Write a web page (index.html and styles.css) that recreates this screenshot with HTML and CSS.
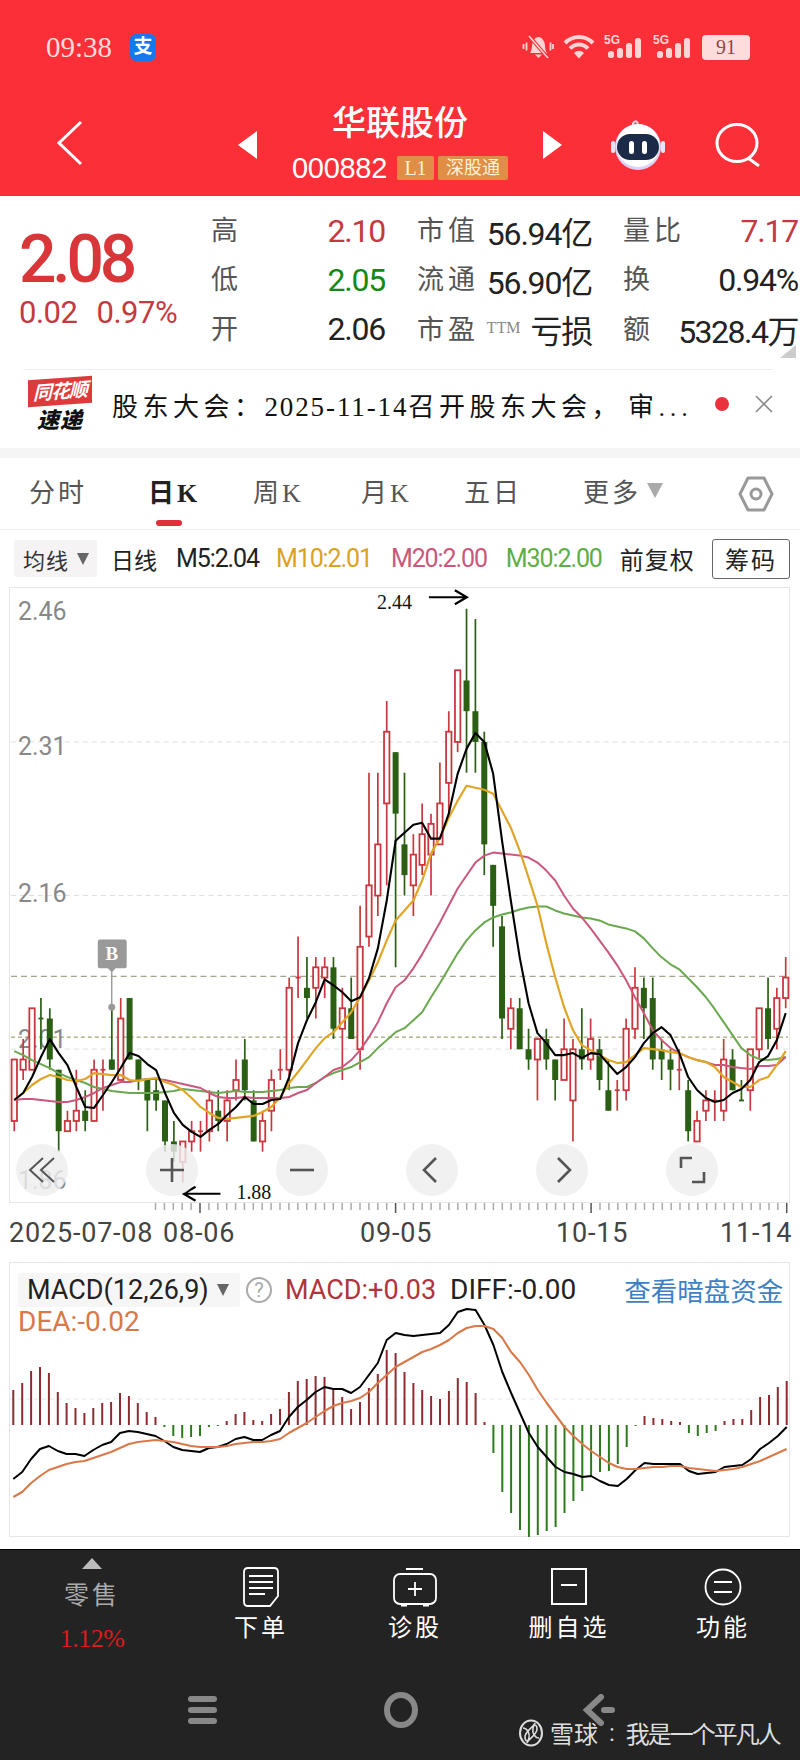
FILE: index.html
```html
<!DOCTYPE html>
<html lang="zh-CN">
<head>
	<meta charset="UTF-8">
	<title>华联股份</title>
	<link rel="stylesheet" href="styles.css">
	<script src="script.js"></script>
</head>
<body>
	<header class="top">
		<div class="status">
			<span class="clock">09:38</span>
			<span class="pay">支</span>
			<div class="status-icons">
				<svg class="s-bell" viewBox="0 0 32 24" width="32" height="24">
					<path d="M8 18 C11 14 9 8 12 5 C14 1 19 1 21 5 C24 8 22 14 25 18 Z" fill="#ffd4d4"/>
					<path d="M13 19.500 H20 L16.500 23 Z" fill="#ffd4d4"/>
					<path d="M7 1 L26 23" stroke="#fb2f38" stroke-width="3.600"/>
					<path d="M7 1 L26 23" stroke="#ffd4d4" stroke-width="1.600"/>
					<path d="M1.500 9 V14 M4.500 7.500 V15.500 M28.500 7.500 V15.500 M31 9 V14" stroke="#ffd4d4" stroke-width="1.800"/>
				</svg>
				<svg class="s-wifi" viewBox="0 0 32 24" width="32" height="24">
					<path d="M2 8 C10 0 22 0 30 8" fill="none" stroke="#ffd4d4" stroke-width="4"/>
					<path d="M7 13.500 C12 8 20 8 25 13.500" fill="none" stroke="#ffd4d4" stroke-width="4"/>
					<path d="M11 18 C14 15 18 15 21 18 L16 23.500 Z" fill="#ffd4d4"/>
				</svg>
				<svg class="s-signal" viewBox="0 -4 40 28" width="40" height="28">
					<text x="0" y="9" class="s-five">5G</text>
					<rect x="4" y="16" width="6" height="7" rx="2.500" fill="#ffd4d4"/>
					<rect x="13" y="13" width="6" height="10" rx="2.500" fill="#ffd4d4"/>
					<rect x="22" y="8" width="6" height="15" rx="2.500" fill="#ffd4d4"/>
					<rect x="31" y="3" width="6" height="20" rx="2.500" fill="#ffd4d4"/>
				</svg>
				<svg class="s-signal" viewBox="0 -4 40 28" width="40" height="28">
					<text x="0" y="9" class="s-five">5G</text>
					<rect x="4" y="16" width="6" height="7" rx="2.500" fill="#ffd4d4"/>
					<rect x="13" y="13" width="6" height="10" rx="2.500" fill="#ffd4d4"/>
					<rect x="22" y="8" width="6" height="15" rx="2.500" fill="#ffd4d4"/>
					<rect x="31" y="3" width="6" height="20" rx="2.500" fill="#ffd4d4"/>
				</svg>
				<span class="battery">91</span>
			</div>
		</div>
		<div class="bar">
			<svg class="back" viewBox="0 0 27 46" width="27" height="46">
				<path d="M25 2 L3 23 L25 44" fill="none" stroke="#fff" stroke-width="3"/>
			</svg>
			<div class="stock-nav">
				<i class="tri-left"></i>
				<div class="stock">
					<div class="stock-name">华联股份</div>
					<div class="stock-code">
						<span class="code">000882</span>
						<span class="tag tag-l1">L1</span>
						<span class="tag">深股通</span>
					</div>
				</div>
				<i class="tri-right"></i>
			</div>
			<svg class="robot" viewBox="0 0 54 50" width="54" height="50">
				<path d="M23 8 C20 3 24 0 26 2 C28 4 26 6 24 5" fill="none" stroke="#f4d8e8" stroke-width="2"/>
				<circle cx="27" cy="27" r="23" fill="#dcd2f8"/>
				<circle cx="27" cy="25.500" r="21.500" fill="#fff"/>
				<rect x="0" y="21" width="4" height="12" rx="2" fill="#e8e2fa"/>
				<rect x="50" y="21" width="4" height="12" rx="2" fill="#e8e2fa"/>
				<rect x="6" y="14" width="42" height="26" rx="13" fill="#1b2a48"/>
				<rect x="18" y="21" width="5" height="13" rx="2.500" fill="#fff"/>
				<rect x="31" y="21" width="5" height="13" rx="2.500" fill="#fff"/>
			</svg>
			<svg class="search" viewBox="0 0 46 44" width="46" height="44">
				<ellipse cx="22" cy="20" rx="20" ry="18.500" fill="none" stroke="#fff" stroke-width="3"/>
				<path d="M33 35 L44 43" stroke="#fff" stroke-width="3"/>
			</svg>
		</div>
	</header>

	<section class="quote">
		<div class="price">
			<div class="last">2.08</div>
			<div class="change"><span>0.02</span><span>0.97%</span></div>
		</div>
		<div class="stats">
			<span class="name">高</span><span class="val up">2.10</span>
			<span class="name n2">市值</span><span class="val">56.94亿</span>
			<span class="name n3">量比</span><span class="val up">7.17</span>

			<span class="name">低</span><span class="val down">2.05</span>
			<span class="name n2">流通</span><span class="val">56.90亿</span>
			<span class="name n3">换</span><span class="val">0.94%</span>

			<span class="name">开</span><span class="val">2.06</span>
			<span class="name n2">市盈</span><span class="val"><small class="ttm">TTM</small>亏损</span>
			<span class="name n3">额</span><span class="val amount">5328.4万</span>
		</div>
		<i class="corner"></i>
	</section>

	<section class="news">
		<div class="logo">
			<div class="logo-top">同花顺</div>
			<div class="logo-bottom">速递</div>
		</div>
		<p class="news-text">股东大会：<span class="date">2025-11-14</span>召开股东大会<span class="comma">，</span>审...</p>
		<i class="dot"></i>
		<svg class="close" viewBox="0 0 18 18" width="18" height="18">
			<path d="M1 1 L17 17 M17 1 L1 17" stroke="#888" stroke-width="1.6"/>
		</svg>
	</section>

	<nav class="tabs">
		<a>分时</a>
		<a class="active">日K</a>
		<a>周K</a>
		<a>月K</a>
		<a>五日</a>
		<a>更多<i class="caret"></i></a>
		<svg class="hex" viewBox="0 0 36 36" width="36" height="36">
			<path d="M10 2 H26 L34 18 L26 34 H10 L2 18 Z" fill="none" stroke="#999" stroke-width="3" stroke-linejoin="round"/>
			<circle cx="18" cy="18" r="5" fill="none" stroke="#999" stroke-width="3"/>
		</svg>
	</nav>

	<div class="ma-row">
		<div class="chip">均线<i class="chip-caret"></i></div>
		<span class="ma-day">日线</span>
		<span class="m5">M5:2.04</span>
		<span class="m10">M10:2.01</span>
		<span class="m20">M20:2.00</span>
		<span class="m30">M30:2.00</span>
		<span class="adjust">前复权</span>
		<button class="chips-btn">筹码</button>
	</div>

	<div class="chart">
		<svg id="kline" viewBox="9 587 781 615"></svg>
		<div class="chart-btns">
			<div class="round"><svg viewBox="0 0 30 30" width="30" height="30"><path d="M16 3 L3 15 L16 27 M27 3 L14 15 L27 27" fill="none" stroke="#555" stroke-width="2"/></svg></div>
			<div class="round"><svg viewBox="0 0 30 30" width="30" height="30"><path d="M15 3 V27 M3 15 H27" fill="none" stroke="#555" stroke-width="2.600"/></svg></div>
			<div class="round"><svg viewBox="0 0 30 30" width="30" height="30"><path d="M3 15 H27" fill="none" stroke="#555" stroke-width="2.600"/></svg></div>
			<div class="round"><svg viewBox="0 0 30 30" width="30" height="30"><path d="M19 3 L7 15 L19 27" fill="none" stroke="#555" stroke-width="2.600"/></svg></div>
			<div class="round"><svg viewBox="0 0 30 30" width="30" height="30"><path d="M11 3 L23 15 L11 27" fill="none" stroke="#555" stroke-width="2.600"/></svg></div>
			<div class="round"><svg viewBox="0 0 30 30" width="30" height="30"><path d="M15 3 H4 V13 M15 27 H27 V17" fill="none" stroke="#555" stroke-width="2.600"/></svg></div>
		</div>
	</div>
	<svg id="ticks" class="ticks" viewBox="0 0 800 12" width="800" height="12"></svg>
	<div class="dates">
		<span>2025-07-08</span>
		<span>08-06</span>
		<span>09-05</span>
		<span>10-15</span>
		<span>11-14</span>
	</div>

	<div class="macd">
		<svg id="macdsvg" viewBox="9 1262 781 275"></svg>
		<div class="macd-head">
			<div class="macd-sel">MACD(12,26,9)<i class="chip-caret"></i></div>
			<span class="help">?</span>
			<span class="macd-val">MACD:+0.03</span>
			<span class="diff-val">DIFF:-0.00</span>
			<a class="dark-link">查看暗盘资金</a>
		</div>
		<div class="dea-val">DEA:-0.02</div>
	</div>

	<footer class="foot">
		<div class="actions">
			<div class="action retail">
				<i class="up-tri"></i>
				<span class="retail-name">零售</span>
				<span class="retail-pct">1.12%</span>
			</div>
			<div class="action">
				<svg viewBox="0 0 36 40" width="36" height="40">
					<path d="M5 1 H31 Q35 1 35 5 V29 L27 39 H5 Q1 39 1 35 V5 Q1 1 5 1 Z" fill="none" stroke="#fff" stroke-width="1.800"/>
					<path d="M6 9 H30 M6 15 H30 M6 21 H30 M6 27 H22" stroke="#fff" stroke-width="1.800"/>
				</svg>
				<span>下单</span>
			</div>
			<div class="action">
				<svg viewBox="0 0 44 40" width="44" height="40">
					<path d="M13 2 H30" stroke="#fff" stroke-width="2"/>
					<rect x="1" y="7" width="42" height="30" rx="6" fill="none" stroke="#fff" stroke-width="1.800"/>
					<path d="M22 15 V29 M15 22 H29" stroke="#fff" stroke-width="1.800"/>
					<path d="M8 38 H14 M30 38 H36" stroke="#fff" stroke-width="3"/>
				</svg>
				<span>诊股</span>
			</div>
			<div class="action">
				<svg viewBox="0 0 36 40" width="36" height="40">
					<rect x="1" y="2" width="34" height="35" fill="none" stroke="#fff" stroke-width="2"/>
					<path d="M10 18 H26" stroke="#fff" stroke-width="2"/>
				</svg>
				<span>删自选</span>
			</div>
			<div class="action">
				<svg viewBox="0 0 38 40" width="38" height="40">
					<circle cx="19" cy="20" r="17.500" fill="none" stroke="#fff" stroke-width="1.800"/>
					<path d="M10 15 H28 M10 25 H28" stroke="#fff" stroke-width="2"/>
				</svg>
				<span>功能</span>
			</div>
		</div>
		<div class="sysnav">
			<div class="sys-bars"><i></i><i></i><i></i></div>
			<i class="sys-ring"></i>
			<svg viewBox="0 0 34 32" width="34" height="32">
				<path d="M19 3 L5 16 L19 29" fill="none" stroke="#888" stroke-width="6" stroke-linecap="round"/>
				<path d="M22 16 H30" stroke="#888" stroke-width="6" stroke-linecap="round"/>
			</svg>
		</div>
		<div class="mark">
			<svg viewBox="0 0 26 28" width="26" height="28">
				<ellipse cx="13" cy="14" rx="11" ry="12.500" fill="none" stroke="#ddd" stroke-width="2"/>
				<path d="M5 9 C9 9 12 14 11 19 C10 24 7 22 7 18 C7 12 16 8 17 4 M21 19 C17 19 14 14 15 9 C16 4 19 6 19 10 C19 16 10 20 9 24" fill="none" stroke="#ddd" stroke-width="1.600"/>
			</svg>
			<span>雪球</span>
			<span class="mark-colon">:</span>
			<span class="mark-name">我是一个平凡人</span>
		</div>
	</footer>
</body>
</html>
```

FILE: styles.css
```css
* {
	box-sizing: border-box;
}
body {
	margin: 0;
	width: 800px;
	height: 1760px;
	overflow: hidden;
	background: #fff;
	color: #222;
	font-family: Roboto, "Noto Sans CJK SC", sans-serif;
}
i {
	display: block;
}
p {
	margin: 0;
}

/* red header */
.top {
	height: 196px;
	background: #fb2f38;
	border-bottom: 1px solid #b9484c;
}
.status {
	height: 94px;
	display: flex;
	align-items: center;
	padding-left: 46px;
}
.clock {
	width: 84px;
	font-family: "Liberation Serif", serif;
	font-size: 29px;
	color: #ffdcdc;
}
.pay {
	width: 26px;
	height: 27px;
	line-height: 25px;
	text-align: center;
	border-radius: 6px;
	background: #1677ee;
	color: #fff;
	font-size: 19px;
	font-weight: 700;
}
.status-icons {
	margin-left: auto;
	margin-right: 50px;
	display: flex;
	align-items: center;
	gap: 9px;
}
.s-signal {
	margin-bottom: 4px;
}
.s-five {
	font-family: "Liberation Sans", sans-serif;
	font-size: 12px;
	font-weight: 700;
	fill: #ffd4d4;
}
.battery {
	width: 48px;
	height: 25px;
	line-height: 25px;
	text-align: center;
	border-radius: 4px;
	background: #ffdcdc;
	color: #8a4a4a;
	font-family: "Liberation Serif", serif;
	font-size: 20px;
}
.bar {
	height: 101px;
	display: flex;
	align-items: center;
	padding-left: 56px;
}
.back {
	margin-bottom: 4px;
}
.stock-nav {
	width: 324px;
	margin-left: 155px;
	display: flex;
	align-items: center;
	justify-content: space-between;
}
.tri-left {
	border-top: 14px solid transparent;
	border-bottom: 14px solid transparent;
	border-right: 19px solid #fff;
}
.tri-right {
	border-top: 14px solid transparent;
	border-bottom: 14px solid transparent;
	border-left: 19px solid #fff;
}
.stock {
	margin-bottom: 4px;
	text-align: center;
	color: #fff;
}
.stock-name {
	font-size: 34px;
	line-height: 36px;
	font-weight: 500;
}
.stock-code {
	margin-top: 15px;
	display: flex;
	align-items: center;
	gap: 4px;
}
.code {
	margin-right: 6px;
	font-family: "Liberation Sans", sans-serif;
	font-size: 29px;
	line-height: 24px;
	letter-spacing: -0.3px;
}
.tag {
	height: 24px;
	padding: 0 8px;
	line-height: 24px;
	background: #e08e45;
	color: #fff3d9;
	font-size: 18px;
	border-radius: 2px;
}
.tag-l1 {
	width: 37px;
	padding: 0;
	font-family: "Liberation Serif", serif;
	font-size: 20px;
}
.robot {
	margin-left: 49px;
}
.search {
	margin-left: 50px;
}

/* quote numbers */
.quote {
	position: relative;
	height: 174px;
	display: flex;
	padding-top: 10px;
}
.price {
	width: 211px;
	padding-left: 19px;
	color: #d9363a;
}
.last {
	margin-top: 21px;
	font-size: 66px;
	line-height: 66px;
	letter-spacing: -4.200px;
	font-weight: 500;
}
.change {
	margin-top: 3px;
	display: flex;
	gap: 19px;
	font-size: 31px;
	line-height: 34px;
	letter-spacing: -0.500px;
	color: #c43a42;
}
.stats {
	display: grid;
	grid-template-columns: 40px 134px 97px 110px 84px 122px;
	grid-template-rows: 49px 49px 50px;
	align-items: center;
	white-space: nowrap;
}
.name {
	margin-bottom: 4px;
	font-size: 27px;
	letter-spacing: 4px;
	color: #555;
}
.n2 {
	padding-left: 32px;
}
.n3 {
	padding-left: 31px;
}
.val {
	text-align: right;
	font-size: 32px;
	letter-spacing: -1.200px;
	color: #222;
}
.amount {
	letter-spacing: -1.500px;
}
.up {
	color: #c43a42;
}
.down {
	color: #138a14;
}
.ttm {
	margin-right: 10px;
	vertical-align: 10px;
	font-family: "Liberation Serif", serif;
	font-size: 16px;
	letter-spacing: 0;
	color: #888;
}
.corner {
	position: absolute;
	right: 4px;
	top: 149px;
	border-left: 16px solid transparent;
	border-bottom: 13px solid #ccc;
}

/* news strip */
.news {
	position: relative;
	height: 88px;
	margin: 0;
	padding: 0 27px 10px 28px;
	display: flex;
	align-items: center;
	border-bottom: 10px solid #f5f5f5;
}
.news::before {
	content: "";
	position: absolute;
	top: -1px;
	left: 25px;
	right: 27px;
	height: 1px;
	background: #eee;
}
.logo {
	width: 64px;
	text-align: center;
}
.logo-top {
	height: 27px;
	line-height: 27px;
	background: #dd3a3c;
	color: #fff;
	font-size: 19px;
	font-weight: 700;
	font-style: italic;
	white-space: nowrap;
	letter-spacing: -1px;
	transform: skewY(-4deg);
}
.logo-bottom {
	margin-top: 5px;
	line-height: 21px;
	font-size: 22px;
	font-weight: 900;
	font-style: italic;
	color: #111;
	letter-spacing: 1px;
}
.news-text {
	margin-left: 20px;
	width: 604px;
	font-size: 26px;
	letter-spacing: 4.500px;
	white-space: nowrap;
	color: #111;
}
.date {
	font-family: "Liberation Serif", serif;
	font-size: 27px;
	letter-spacing: 1.900px;
}
.comma {
	padding-right: 6px;
}
.dot {
	width: 14px;
	height: 14px;
	border-radius: 50%;
	background: #e8323c;
}
.close {
	margin-left: 26px;
}

/* period tabs */
.tabs {
	position: relative;
	height: 72px;
	padding: 0 0 6px 29px;
	display: grid;
	grid-template-columns: 119px 105px 108px 103px 119px 155px auto;
	align-items: center;
	border-bottom: 1px solid #eee;
}
.tabs a {
	position: relative;
	font-family: "Liberation Serif", "Noto Sans CJK SC", serif;
	font-size: 26px;
	letter-spacing: 3px;
	color: #555;
	white-space: nowrap;
	display: flex;
	align-items: center;
}
.tabs a.active {
	font-weight: 700;
	color: #222;
}
.tabs a.active::after {
	content: "";
	position: absolute;
	left: 8px;
	top: 48px;
	width: 26px;
	height: 6px;
	border-radius: 3px;
	background: #e0303a;
}
.caret {
	margin-left: 6px;
	border-top: 15px solid #aaa;
	border-left: 8px solid transparent;
	border-right: 8px solid transparent;
}
.hex {
	margin-top: 6px;
}

/* moving average row */
.ma-row {
	height: 57px;
	padding: 0 10px 0 14px;
	display: flex;
	align-items: center;
	font-size: 25px;
	letter-spacing: -1.100px;
	white-space: nowrap;
}
.ma-row > * {
	flex-shrink: 0;
}
.chip {
	width: 83px;
	height: 37px;
	padding-left: 9px;
	display: flex;
	align-items: center;
	gap: 8px;
	background: #f5f3f3;
	border-radius: 3px;
	font-size: 22px;
	letter-spacing: 1px;
	color: #333;
}
.chip-caret {
	border-top: 12px solid #666;
	border-left: 6px solid transparent;
	border-right: 6px solid transparent;
}
.ma-day {
	margin-left: 14px;
	letter-spacing: 0;
	font-size: 23px;
}
.m5 {
	margin-left: 19px;
}
.m10 {
	margin-left: 17px;
	color: #dba21f;
}
.m20 {
	margin-left: 19px;
	color: #c9587a;
}
.m30 {
	margin-left: 19px;
	color: #5fae45;
}
.adjust {
	margin-left: 18px;
	font-size: 24px;
	letter-spacing: 1px;
}
.chips-btn {
	width: 78px;
	height: 40px;
	margin-left: auto;
	padding: 0;
	background: #fff;
	border: 1px solid #666;
	border-radius: 3px;
	font-family: inherit;
	font-size: 24px;
	letter-spacing: 2px;
	color: #222;
}

/* kline */
.chart {
	position: relative;
	width: 781px;
	height: 616px;
	margin-left: 9px;
	border: 1px solid #e6e6e6;
}
#kline {
	position: absolute;
	left: 0;
	top: 0;
	width: 779px;
	height: 614px;
	overflow: visible;
}
.axis {
	font-family: Roboto, sans-serif;
	font-size: 25px;
	fill: #888;
}
.mark-txt {
	font-family: "Liberation Serif", serif;
	font-size: 20px;
	fill: #111;
}
.chart-btns {
	position: absolute;
	left: 6px;
	bottom: 6px;
	display: flex;
	gap: 78px;
}
.round {
	width: 52px;
	height: 52px;
	display: flex;
	align-items: center;
	justify-content: center;
	border-radius: 50%;
	background: rgba(238, 238, 238, 0.82);
}
.ticks {
	display: block;
}
.dates {
	height: 47px;
	padding: 0 0 11px 9px;
	display: grid;
	grid-template-columns: 154px 197px 196px 164px auto;
	align-items: center;
	font-size: 27px;
	color: #444;
	white-space: nowrap;
}
.dates span {
	letter-spacing: 0.800px;
}

/* macd */
.macd {
	position: relative;
	width: 781px;
	height: 275px;
	margin-left: 9px;
	border: 1px solid #e6e6e6;
	font-size: 27px;
}
#macdsvg {
	position: absolute;
	left: -1px;
	top: -1px;
	width: 781px;
	height: 275px;
}
.macd-head {
	position: relative;
	padding: 7px 0 0 8px;
	display: flex;
	align-items: center;
	white-space: nowrap;
}
.macd-sel {
	width: 222px;
	height: 34px;
	padding-left: 9px;
	display: flex;
	align-items: center;
	gap: 8px;
	background: #f6f6f6;
	border-radius: 3px;
}
.help {
	width: 26px;
	height: 26px;
	margin-left: 6px;
	line-height: 22px;
	text-align: center;
	border: 2px solid #aaa;
	border-radius: 50%;
	font-size: 20px;
	color: #aaa;
}
.macd-val {
	margin-left: 13px;
	color: #b0343c;
}
.diff-val {
	margin-left: 14px;
	font-size: 28px;
}
.dark-link {
	margin-left: 48px;
	font-size: 26.500px;
	color: #3d7fc4;
}
.dea-val {
	position: relative;
	margin-left: 8px;
	line-height: 26px;
	font-size: 28px;
	color: #d9794a;
}

/* dark footer */
.foot {
	position: relative;
	height: 211px;
	margin-top: 12px;
	background: #232323;
	border-top: 1px solid #000;
	color: #fff;
}
.actions {
	display: grid;
	grid-template-columns: 176px 170px 138px 170px 138px;
	height: 107px;
}
.action {
	padding-top: 17px;
	display: flex;
	flex-direction: column;
	align-items: center;
	font-size: 24px;
	letter-spacing: 3px;
}
.action span {
	margin-top: 6px;
	line-height: 30px;
	white-space: nowrap;
}
.retail {
	padding-top: 8px;
	padding-left: 8px;
}
.up-tri {
	border-bottom: 11px solid #bbb;
	border-left: 10px solid transparent;
	border-right: 10px solid transparent;
}
.action .retail-name {
	margin-top: 12px;
	color: #aaa;
	font-size: 25px;
}
.action .retail-pct {
	margin-top: 13px;
	font-family: "Liberation Serif", serif;
	font-size: 26px;
	letter-spacing: -0.500px;
	color: #d91c1c;
}
.sysnav {
	height: 36px;
	margin-top: 35px;
	padding-left: 188px;
	display: flex;
	align-items: center;
}
.sys-bars {
	width: 29px;
	display: flex;
	flex-direction: column;
	gap: 5px;
}
.sys-bars i {
	height: 6px;
	border-radius: 3px;
	background: #888;
}
.sys-ring {
	width: 34px;
	height: 36px;
	margin-left: 167px;
	margin-right: 164px;
	border: 6px solid #888;
	border-radius: 50%;
}
.mark {
	position: absolute;
	left: 518px;
	top: 165px;
	display: flex;
	align-items: center;
	gap: 6px;
	font-size: 24px;
	color: #ddd;
	white-space: nowrap;
}
.mark-colon {
	margin: 0 5px;
}
.mark-name {
	letter-spacing: -2px;
}
```

FILE: script.js
```js
// each candle: colour, high, body top, body bottom, low (price in cents)
var candles = [
	["r",200,200,194,193],["r",202,200,199,198],["r",205,205,199,199],["g",206,204,204,201],
	["g",205,204,200,199],["g",199,199,193,191],["r",195,194,193,193],["r",199,195,194,193],
	["g",197,195,194,193],["r",200,199,194,194],["r",200,199,199,195],["g",205,200,199,199],
	["r",206,204,198,198],["g",206,206,200,200],["g",200,200,198,197],["g",198,198,196,193],
	["g",198,197,196,195],["g",196,196,192,191],["g",194,192,191,190],["r",192,192,190,188],
	["r",194,193,192,191],["r",194,193,193,191],["r",197,196,193,192],["g",197,195,194,193],
	["r",197,196,194,192],["r",200,198,197,196],["g",202,200,197,196],["g",197,196,192,192],
	["r",195,194,192,191],["r",199,198,195,193],["r",201,199,199,198],["r",208,207,199,197],
	["r",212,208,208,206],["g",210,207,206,204],["r",210,209,207,204],["r",210,209,208,206],
	["g",210,209,203,202],["r",207,205,203,198],["g",208,205,202,202],["r",215,211,201,199],
	["r",228,217,212,211],["r",228,221,216,214],["r",235,232,225,217],["g",230,230,224,209],
	["g",228,221,218,216],["r",222,220,217,214],["r",225,222,219,218],["r",224,223,220,216],
	["r",229,225,221,221],["r",234,232,227,224],["r",238,238,231,230],["g",244,237,234,228],
	["g",243,234,231,228],["g",232,231,221,218],["g",219,219,215,211],["g",214,213,204,202],
	["r",206,205,203,201],["g",206,205,201,201],["g",203,201,200,199],["r",202,202,200,196],
	["g",203,202,200,199],["g",200,200,198,196],["r",204,201,198,198],["r",202,201,196,192],
	["g",205,201,200,199],["r",204,202,200,199],["g",202,201,198,197],["g",200,197,195,195],
	["r",198,197,197,195],["r",204,203,197,196],["r",209,207,203,202],["g",208,207,205,202],
	["g",208,206,200,199],["g",202,201,200,198],["g",201,200,199,197],["r",201,199,199,197],
	["g",198,197,193,192],["r",195,194,192,192],["r",197,196,195,194],["r",197,196,196,194],
	["r",202,200,195,194],["g",201,200,197,197],["g",198,196,196,196],["r",201,201,197,195],
	["r",205,205,201,200],["g",208,205,202,201],["r",207,206,203,201],["r",210,208,206,205]
];
// moving averages, y on the page
var m5 = [1100,1093,1077,1057,1039,1053,1065,1087,1107,1108,1095,1082,1068,1053,1056,1064,1070,1093,1113,1125,1132,1137,1130,1124,1115,1107,1097,1104,1104,1100,1099,1077,1043,1020,1002,979,985,992,1001,997,978,948,900,840,832,824,822,838,838,813,773,748,732,741,773,840,900,957,1003,1033,1043,1055,1055,1053,1058,1053,1054,1064,1074,1067,1057,1043,1033,1027,1035,1053,1077,1090,1098,1102,1100,1093,1089,1080,1062,1056,1040,1013];
var m10 = [1100,1093,1085,1079,1075,1077,1080,1081,1079,1073,1074,1075,1075,1080,1081,1079,1078,1082,1085,1090,1098,1107,1113,1118,1119,1118,1117,1116,1112,1107,1097,1083,1072,1060,1048,1038,1032,1022,1012,997,980,962,940,920,910,900,880,853,837,817,800,785,787,789,793,810,827,850,877,905,943,977,1007,1030,1045,1050,1055,1060,1063,1062,1055,1048,1049,1050,1052,1053,1057,1060,1062,1067,1077,1082,1087,1087,1080,1077,1065,1051];
var m20 = [1100,1099,1099,1100,1101,1102,1102,1100,1097,1093,1088,1085,1082,1082,1080,1079,1079,1080,1082,1084,1086,1088,1093,1097,1098,1098,1097,1098,1098,1098,1098,1097,1093,1090,1083,1077,1070,1067,1060,1050,1037,1022,1003,987,980,968,954,938,922,905,888,875,862,855,852,853,854,855,857,862,870,880,895,908,917,928,940,952,965,980,997,1013,1030,1040,1048,1053,1057,1060,1062,1065,1065,1067,1068,1069,1066,1066,1065,1057];
var m30 = [1051,1055,1060,1064,1068,1073,1077,1080,1083,1087,1089,1091,1092,1093,1093,1093,1093,1092,1091,1089,1090,1091,1092,1093,1092,1091,1092,1092,1092,1091,1090,1088,1087,1087,1083,1077,1073,1070,1067,1062,1057,1048,1040,1032,1028,1020,1012,997,983,968,953,940,930,922,917,914,912,909,907,906,906,910,913,915,917,918,920,924,926,928,931,938,948,957,964,969,978,987,997,1009,1022,1035,1048,1055,1059,1060,1059,1057];
// macd bars, px above the zero line
var bars = [35,42,54,58,52,33,22,17,12,17,22,23,32,29,22,13,8,-2,-11,-13,-12,-11,-2,-1,4,11,13,5,4,11,16,33,44,46,49,48,35,28,16,23,37,51,75,72,53,42,35,29,26,34,47,43,32,3,-28,-67,-88,-105,-112,-110,-106,-102,-88,-76,-66,-52,-47,-46,-39,-22,-1,9,7,6,4,3,-8,-11,-8,-6,4,6,6,15,28,30,38,44];
var diff = [1479,1472,1459,1449,1446,1451,1454,1454,1456,1450,1445,1442,1433,1431,1432,1434,1436,1441,1447,1450,1451,1452,1448,1447,1444,1439,1437,1440,1440,1435,1431,1417,1407,1400,1392,1387,1389,1389,1393,1387,1375,1363,1340,1333,1335,1336,1335,1334,1333,1325,1312,1309,1310,1325,1345,1372,1393,1413,1433,1447,1457,1467,1472,1474,1477,1476,1481,1485,1486,1479,1470,1463,1464,1464,1464,1464,1471,1474,1473,1472,1467,1466,1465,1459,1449,1443,1436,1427];
var dea = [1497,1492,1483,1476,1470,1467,1464,1462,1461,1458,1455,1452,1448,1444,1442,1441,1440,1441,1442,1444,1446,1447,1447,1447,1446,1444,1443,1442,1442,1441,1439,1433,1428,1423,1417,1411,1406,1403,1401,1398,1392,1383,1375,1367,1362,1357,1352,1349,1345,1340,1333,1328,1326,1326,1329,1338,1352,1362,1375,1390,1403,1415,1427,1436,1444,1451,1457,1463,1467,1469,1469,1468,1467,1467,1466,1466,1468,1469,1470,1471,1470,1469,1467,1464,1461,1457,1453,1449];

function xAt(i) {
	return 13.3 + 8.89 * i;
}
function yAt(cents) {
	return 587 + (246 - cents) * 10.27;
}
function polyline(ys, color, width) {
	var pts = [];
	for (var i = 0; i < ys.length; i++) {
		pts.push(xAt(i).toFixed(1) + "," + ys[i]);
	}
	return '<polyline points="' + pts.join(" ") + '" fill="none" stroke="' + color + '" stroke-width="' + width + '" stroke-linejoin="round"/>';
}
function hline(y, color, dash) {
	return '<line x1="10" x2="789" y1="' + y + '" y2="' + y + '" stroke="' + color + '" stroke-dasharray="' + dash + '"/>';
}

function drawKline() {
	var html = "";
	html += hline(741, "#dedede", "5 4") + hline(895, "#dedede", "5 4") + hline(1049, "#dedede", "5 4");
	html += hline(976, "#8f8a72", "6 4") + hline(1037, "#8f8a50", "4 3");
	html += '<text class="axis" x="17" y="619">2.46</text><text class="axis" x="17" y="754">2.31</text>';
	html += '<text class="axis" x="17" y="902">2.16</text><text class="axis" x="17" y="1048">2.01</text>';
	html += '<text class="axis" x="17" y="1189">1.86</text>';

	for (var i = 0; i < candles.length; i++) {
		var c = candles[i];
		var x = xAt(i).toFixed(1);
		var color = c[0] == "r" ? "#c8383f" : "#2b5f14";
		var top = yAt(c[2]);
		var bot = yAt(c[3]);
		html += '<line x1="' + x + '" x2="' + x + '" y1="' + yAt(c[1]) + '" y2="' + yAt(c[4]) + '" stroke="' + color + '" stroke-width="1.700"/>';
		if (c[2] == c[3]) {
			html += '<line x1="' + (x - 2.5) + '" x2="' + (x - 0 + 2.5) + '" y1="' + top + '" y2="' + top + '" stroke="' + color + '" stroke-width="1.800"/>';
		} else if (c[0] == "r") {
			html += '<rect x="' + (x - 2.7) + '" y="' + top + '" width="5.4" height="' + (bot - top) + '" fill="#fff" stroke="' + color + '" stroke-width="1.800"/>';
		} else {
			html += '<rect x="' + (x - 3) + '" y="' + top + '" width="6" height="' + (bot - top) + '" fill="' + color + '"/>';
		}
	}

	html += polyline(m30, "#6aa84f", 2) + polyline(m20, "#c9587a", 2) + polyline(m10, "#e0a526", 2.2) + polyline(m5, "#000", 2.1);

	// buy mark
	html += '<line x1="111" x2="111" y1="970" y2="1007" stroke="#999" stroke-width="1.400"/><circle cx="111" cy="1007" r="3.500" fill="#999"/>';
	html += '<path d="M99 939 H124 Q126 939 126 941 V966 Q126 968 124 968 H115 L111 972 L107 968 H99 Q97 968 97 966 V941 Q97 939 99 939 Z" fill="#999"/>';
	html += '<text x="111" y="960" text-anchor="middle" font-family="Liberation Serif" font-size="19" font-weight="700" fill="#fff">B</text>';

	// high and low arrows
	html += '<text class="mark-txt" x="377" y="608">2.44</text>';
	html += '<path d="M429 596 H467 M455 589 L467 596 L455 603" fill="none" stroke="#000" stroke-width="2.200"/>';
	html += '<text class="mark-txt" x="236" y="1199">1.88</text>';
	html += '<path d="M220 1194 H183 M195 1187 L183 1194 L195 1201" fill="none" stroke="#000" stroke-width="2.200"/>';
	document.querySelector("#kline").innerHTML = html;
}

function drawTicks() {
	var html = "";
	for (var i = 16; i < candles.length; i++) {
		var major = (i == 21 || i == 43 || i == 65 || i == 87);
		var h = major ? 10 : 7;
		var color = major ? "#555" : "#aaa";
		html += '<line x1="' + xAt(i).toFixed(1) + '" x2="' + xAt(i).toFixed(1) + '" y1="0" y2="' + h + '" stroke="' + color + '" stroke-width="1.500"/>';
	}
	document.querySelector("#ticks").innerHTML = html;
}

function drawMacd() {
	var html = hline(1399, "#e6e6e6", "4 4");
	for (var i = 0; i < bars.length; i++) {
		var x = xAt(i).toFixed(1);
		var color = bars[i] > 0 ? "#8e2b30" : "#2c7a1c";
		html += '<line x1="' + x + '" x2="' + x + '" y1="1425" y2="' + (1425 - bars[i]) + '" stroke="' + color + '" stroke-width="2"/>';
	}
	html += polyline(diff, "#000", 2) + polyline(dea, "#d9794a", 2.1);
	document.querySelector("#macdsvg").innerHTML = html;
}

window.onload = function () {
	drawKline();
	drawTicks();
	drawMacd();
};
```
